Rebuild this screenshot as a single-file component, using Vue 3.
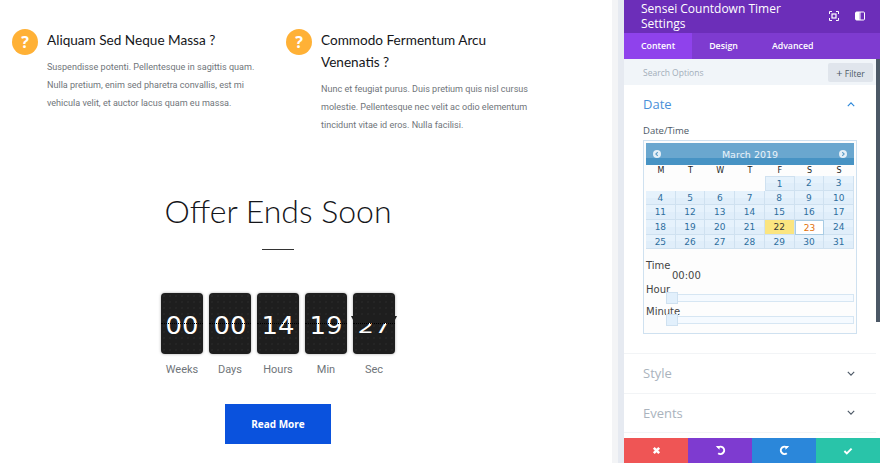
<script setup>
const features = [
  {
    title: 'Aliquam Sed Neque Massa ?',
    text: 'Suspendisse potenti. Pellentesque in sagittis quam. Nulla pretium, enim sed pharetra convallis, est mi vehicula velit, et auctor lacus quam eu massa.'
  },
  {
    title: 'Commodo Fermentum Arcu Venenatis ?',
    text: 'Nunc et feugiat purus. Duis pretium quis nisl cursus molestie. Pellentesque nec velit ac odio elementum tincidunt vitae id eros. Nulla facilisi.'
  }
]

const timer = [
  { value: '00', label: 'Weeks' },
  { value: '00', label: 'Days' },
  { value: '14', label: 'Hours' },
  { value: '19', label: 'Min' },
  { value: '27', label: 'Sec', flip: true }
]

const weekdays = ['M', 'T', 'W', 'T', 'F', 'S', 'S']
const days = Array.from({ length: 31 }, (_, i) => i + 1)
</script>

<template>
  <div class="page">
    <main class="main">
      <section class="features">
        <article v-for="f in features" :key="f.title" class="feature">
          <span class="badge">?</span>
          <div class="feature-body">
            <h3>{{ f.title }}</h3>
            <p>{{ f.text }}</p>
          </div>
        </article>
      </section>

      <section class="offer">
        <h2>Offer Ends Soon</h2>
        <div class="rule"></div>
        <div class="timer">
          <div v-for="t in timer" :key="t.label" class="unit">
            <div class="card" :class="{ flipping: t.flip }">
              <span class="digits">{{ t.value }}</span>
              <i v-if="t.flip" class="flap"></i>
            </div>
            <span class="unit-label">{{ t.label }}</span>
          </div>
        </div>
        <button class="cta">Read More</button>
      </section>
    </main>

    <div class="strip"></div>

    <aside class="panel">
      <header class="panel-head">
        <div class="panel-title">Sensei Countdown Timer Settings</div>
        <svg class="head-icon" viewBox="0 0 10 10" width="10" height="10">
          <path d="M.5 3V.5H3M7 .5h2.500V3M9.500 7v2.500H7M3 9.500H.5V7" fill="none" stroke="#fff" stroke-width="1"/>
          <rect x="3" y="3" width="4" height="4" fill="none" stroke="#fff" stroke-width="1.200"/>
        </svg>
        <svg class="head-icon last" viewBox="0 0 10 10" width="10" height="10">
          <rect x=".5" y="1" width="9" height="8" rx="1" fill="none" stroke="#fff"/>
          <rect x="1" y="1" width="3.500" height="8" fill="#fff"/>
          <path d="M5 1v8" stroke="#fff"/>
        </svg>
      </header>
      <nav class="tabs">
        <a class="tab active">Content</a>
        <a class="tab">Design</a>
        <a class="tab">Advanced</a>
      </nav>

      <div class="panel-scroll">
        <div class="search">
          <span>Search Options</span>
          <button class="filter"><b>+</b> Filter</button>
        </div>

        <section class="group open">
          <div class="group-head blue">
            <span>Date</span>
            <svg viewBox="0 0 10 6" width="8" height="5"><path d="M1 5l4-4 4 4" fill="none" stroke="#2b87da" stroke-width="1.400"/></svg>
          </div>
          <div class="field-label">Date/Time</div>
          <div class="picker">
            <div class="cal-head">
              <i class="nav-dot"><svg viewBox="0 0 8 8" width="6" height="6"><path d="M5 1.500L2.500 4 5 6.500" fill="none" stroke="#5b9cc6" stroke-width="1.500"/></svg></i>
              <span>March 2019</span>
              <i class="nav-dot"><svg viewBox="0 0 8 8" width="6" height="6"><path d="M3 1.500L5.500 4 3 6.500" fill="none" stroke="#5b9cc6" stroke-width="1.500"/></svg></i>
            </div>
            <div class="weekdays">
              <span v-for="(d, i) in weekdays" :key="i">{{ d }}</span>
            </div>
            <div class="days">
              <span
                v-for="d in days"
                :key="d"
                class="day"
                :class="{ first: d === 1, today: d === 22, selected: d === 23 }"
              >{{ d }}</span>
            </div>
            <div class="time-block">
              <div class="time-label">Time</div>
              <div class="time-value">00:00</div>
              <div class="slider-row">
                <span>Hour</span>
                <div class="track"><i class="handle"></i></div>
              </div>
              <div class="slider-row">
                <span>Minute</span>
                <div class="track"><i class="handle"></i></div>
              </div>
            </div>
          </div>
        </section>

        <section class="group">
          <div class="group-head">
            <span>Style</span>
            <svg viewBox="0 0 10 6" width="8" height="5"><path d="M1 1l4 4 4-4" fill="none" stroke="#4c5866" stroke-width="1.400"/></svg>
          </div>
        </section>
        <section class="group">
          <div class="group-head">
            <span>Events</span>
            <svg viewBox="0 0 10 6" width="8" height="5"><path d="M1 1l4 4 4-4" fill="none" stroke="#4c5866" stroke-width="1.400"/></svg>
          </div>
        </section>
      </div>

      <footer class="actions">
        <button class="red">
          <svg viewBox="0 0 10 10" width="9" height="9"><path d="M2 2l6 6M8 2l-6 6" stroke="#fff" stroke-width="2.800"/></svg>
        </button>
        <button class="purple">
          <svg viewBox="0 0 12 12" width="11" height="11"><path d="M3 3.200A4 4 0 1 1 3.500 9" fill="none" stroke="#fff" stroke-width="2.200"/><path d="M.8 1h4.200v4.200z" fill="#fff"/></svg>
        </button>
        <button class="blue-btn">
          <svg viewBox="0 0 12 12" width="11" height="11"><path d="M9 3.200A4 4 0 1 0 8.500 9" fill="none" stroke="#fff" stroke-width="2.200"/><path d="M11.200 1H7v4.200z" fill="#fff"/></svg>
        </button>
        <button class="teal">
          <svg viewBox="0 0 12 10" width="10" height="8"><path d="M1.500 5l3 3 6-6" fill="none" stroke="#fff" stroke-width="2.400"/></svg>
        </button>
      </footer>
    </aside>
  </div>
</template>

<style scoped>
.page {
  display: flex;
  width: 880px;
  height: 463px;
  overflow: hidden;
  background: #fff;
  font-family: Roboto, sans-serif;
}

.main {
  width: 612px;
  flex: none;
}

.features {
  display: grid;
  grid-template-columns: 274px 274px;
  padding: 29px 0 0 12px;
  height: 183px;
  box-sizing: border-box;
}

.feature {
  display: flex;
  gap: 9px;
  align-items: flex-start;
}

.badge {
  flex: none;
  width: 26px;
  height: 26px;
  border-radius: 50%;
  background: #ffb136;
  color: #fff;
  font: 700 16px/26px "Open Sans", sans-serif;
  text-align: center;
}

.feature-body {
  width: 212px;
}

.feature h3 {
  margin: 0;
  font: 400 13.600px/22px Lato, sans-serif;
  color: #15161a;
}

.feature p {
  margin: 7px 0 0;
  font-size: 9.050px;
  line-height: 18px;
  color: #70757a;
}

.offer {
  width: 556px;
  display: flex;
  flex-direction: column;
  align-items: center;
}

.offer h2 {
  margin: 0;
  padding-top: 5px;
  font: 300 32px/46px Lato, sans-serif;
  color: #15161a;
}

.rule {
  width: 32px;
  height: 1px;
  background: #333;
  margin-top: 15px;
}

.timer {
  display: flex;
  gap: 6px;
  margin-top: 43px;
}

.unit {
  width: 42px;
  display: flex;
  flex-direction: column;
  align-items: center;
}

.card {
  position: relative;
  width: 42px;
  height: 61px;
  border-radius: 4px;
  background:
    radial-gradient(circle, #2c2c2c 0.6px, transparent 0.8px) 0 0 / 6px 6px,
    #1e1e1e;
  box-shadow: 0 0 3px rgba(0, 0, 0, 0.35);
  text-align: center;
}

.card::after {
  content: "";
  position: absolute;
  left: 0;
  right: 0;
  top: 30px;
  border-top: 1px dotted #000;
}

.digits {
  display: block;
  padding-top: 19px;
  font: 400 24px/28px "DejaVu Sans", sans-serif;
  color: #fff;
  transform: scaleX(1.08);
}

.flipping .digits {
  transform: scale(1.08, 0.7);
  transform-origin: 50% 38px;
}

.flap {
  position: absolute;
  z-index: 1;
  left: -2px;
  right: -2px;
  top: 23px;
  height: 7px;
  background: #1e1e1e;
  clip-path: polygon(0 0, 100% 0, 92% 100%, 8% 100%);
}

.unit-label {
  margin-top: 9px;
  font-size: 11px;
  line-height: 13px;
  color: #70757a;
}

.cta {
  width: 106px;
  height: 40px;
  margin-top: 28px;
  border: 0;
  background: #0a52dd;
  color: #fff;
  font: 700 10px "Open Sans", sans-serif;
}

.strip {
  width: 12px;
  flex: none;
  background: linear-gradient(to right, #f3f4f6 0 6px, #e6eaf1 6px);
}

.panel {
  position: relative;
  width: 256px;
  flex: none;
  display: flex;
  flex-direction: column;
  background: #fff;
}

.panel-head {
  height: 33px;
  flex: none;
  display: flex;
  align-items: flex-start;
  background: #6c2eb9;
  color: #fff;
  padding-left: 17px;
  box-sizing: border-box;
  overflow: hidden;
}

.panel-title {
  width: 170px;
  margin-top: 1px;
  font: 500 12px/15px "Open Sans", sans-serif;
}

.head-icon {
  margin: 11px 0 0 18px;
}

.head-icon.last {
  margin-left: 16px;
}

.tabs {
  height: 26px;
  flex: none;
  display: flex;
  background: #7e3bd0;
}

.tab {
  padding: 0 17px;
  color: #fff;
  font: 600 8.800px/26px "Open Sans", sans-serif;
}

.tab.active {
  background: #8f42ec;
}

.panel-scroll {
  flex: 1;
  border-right: 4px solid transparent;
  position: relative;
  min-height: 0;
}

.panel-scroll::after {
  content: "";
  position: absolute;
  top: 0;
  right: -4px;
  width: 4px;
  height: 263px;
  background: #4c5866;
}

.search {
  height: 26px;
  display: flex;
  align-items: center;
  justify-content: space-between;
  padding: 0 3px 0 19px;
  background: #f1f5f9;
  color: #a3aeba;
  font: 400 8.500px "Open Sans", sans-serif;
}

.filter {
  width: 45px;
  height: 19px;
  padding: 0;
  border: 0;
  border-radius: 2px;
  background: #e0e5ec;
  color: #4c5866;
  font: 400 8.500px "Open Sans", sans-serif;
}

.filter b {
  font-size: 11px;
  font-weight: 400;
}

.group {
  height: 39px;
  border-bottom: 1px solid #f2f4f6;
  box-sizing: border-box;
  padding: 0 20px 0 19px;
}

.group.open {
  height: 269px;
}

.group + .group {
  height: 39.500px;
}

.group-head {
  display: flex;
  align-items: center;
  justify-content: space-between;
  height: 38px;
  font: 400 13px "Open Sans", sans-serif;
  color: #aab3bd;
}

.group-head svg {
  margin-right: 1px;
}

.group-head.blue {
  color: #4a90d9;
}

.field-label {
  margin-top: 1px;
  font: 400 9.500px/14px "Open Sans", sans-serif;
  color: #4c5866;
}

.picker {
  width: 214px;
  height: 194px;
  margin-top: 2px;
  box-sizing: border-box;
  padding: 2px;
  border: 1px solid #cfe1f0;
  background: #fdfdfd;
  font-family: "DejaVu Sans", sans-serif;
}

.cal-head {
  height: 22px;
  display: flex;
  align-items: center;
  justify-content: space-between;
  padding: 0 7px;
  background: linear-gradient(#6aa7cf 0 15px, #4793c4 15px);
  color: #eaf4fb;
  font-size: 9.500px;
}

.nav-dot {
  width: 8px;
  height: 8px;
  border-radius: 50%;
  background: #e4eff7;
  display: flex;
  align-items: center;
  justify-content: center;
}

.weekdays {
  display: grid;
  grid-template-columns: repeat(7, 1fr);
  height: 11px;
  font-size: 8px;
  line-height: 11px;
  text-align: center;
  color: #222;
}

.days {
  display: grid;
  grid-template-columns: repeat(7, 1fr);
  grid-auto-rows: 14.700px;
}

.day {
  box-sizing: border-box;
  border: 1px solid #cfe1f0;
  border-width: 0 1px 1px 0;
  background: linear-gradient(#e6f2fc 50%, #e0eefa 50%);
  color: #2e6e9e;
  font-size: 9px;
  line-height: 14px;
  text-align: center;
}

.day.first {
  grid-column: 5;
  border-left: 1px solid #cfe1f0;
  border-top: 1px solid #cfe1f0;
}

.day.today {
  background: #fbe580;
  color: #363636;
}

.day.selected {
  background: #fff;
  color: #e17009;
  border: 1px solid #a9cce4;
}

.time-block {
  margin-top: 11px;
  font-size: 10px;
  line-height: 12px;
  color: #444;
}

.time-value {
  margin-left: 26px;
  margin-top: -2px;
}

.slider-row {
  height: 20px;
  margin-top: 2px;
}

.slider-row span {
  display: block;
}

.track {
  position: relative;
  height: 6px;
  margin: -2px 0 0 26px;
  border: 1px solid #d6e6f3;
  background: #f5faff;
}

.handle {
  position: absolute;
  left: -7px;
  top: -3px;
  width: 10px;
  height: 10px;
  border: 1px solid #cfe1f0;
  background: #e2f0fc;
}

.actions {
  position: absolute;
  left: 0;
  right: 0;
  bottom: 0;
  height: 25px;
  display: flex;
}

.actions button {
  flex: 1;
  border: 0;
  padding: 0;
  display: flex;
  align-items: center;
  justify-content: center;
}

.red {
  background: #ef5555;
}

.purple {
  background: #7e3bd0;
}

.blue-btn {
  background: #2b87da;
}

.teal {
  background: #29c4a9;
}
</style>

<style>
html,
body {
  margin: 0;
  overflow: hidden;
}
</style>
